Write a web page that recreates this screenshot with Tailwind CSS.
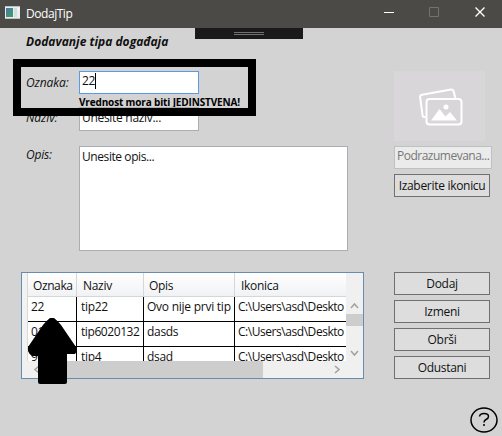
<!DOCTYPE html>
<html lang="sr">
<head>
<meta charset="utf-8">
<title>DodajTip</title>
<script src="https://cdn.jsdelivr.net/npm/@tailwindcss/browser@4"></script>
</head>
<body class="relative flex h-[436px] w-[502px] flex-col overflow-hidden bg-[#d3d3d3] font-['Open_Sans','Noto_Sans',sans-serif] text-[12px] leading-4 tracking-[-0.3px] whitespace-nowrap text-[#111]">
  <header class="flex h-7 shrink-0 items-center bg-[#4b4a47] pl-[5px] text-white">
    <svg class="mb-1 h-[13px] w-[15px]" viewBox="0 0 15 13">
      <defs><linearGradient id="g" x1="0" y1="0" x2="1" y2="1"><stop offset="0" stop-color="#4a78a8"/><stop offset="1" stop-color="#3f9e62"/></linearGradient></defs>
      <path fill="#e9edf0" d="M0 0h15v13H0z"/><path fill="#b8c0c8" d="M0 0h15v1H0zM0 12h15v1H0z"/>
      <path fill="url(#g)" d="M1 2h7v9H1z"/><path fill="#cfe0df" d="M9 2h3v9H9z"/><path fill="#fff" d="M13 2h1v2h-1z"/>
    </svg>
    <h1 class="mb-px ml-[6px] w-[357px] tracking-[-0.45px]">DodajTip</h1>
    <svg class="mb-1 h-[12px] w-[104px]" viewBox="0 0 104 12" fill="none">
      <path stroke="#fff" d="M1 6.500h10"/><path stroke="#73726f" d="M46.500 1.500h9v9h-9z"/><path stroke="#fff" stroke-width="1.400" d="M92.500 1.500l9 9M101.500 1.500l-9 9"/>
    </svg>
  </header>

  <main class="flex h-[408px] flex-col px-[21px]">
    <h2 class="mt-[6px] ml-[5px] h-4 font-bold italic tracking-[0.02px]">Dodavanje tipa događaja</h2>
    <section class="mt-[21px] flex h-[180px]">
      <div class="w-[373px] shrink-0">
        <div class="flex h-9">
          <label class="w-[58px] pt-1 pl-[5px] italic tracking-[-0.1px]">Oznaka:</label>
          <div>
            <div class="flex h-[23px] w-[120px] items-start border border-[#569de5] bg-white pt-px pl-[2px]"><span>22</span><i class="h-4 w-px bg-black"></i></div>
            <p class="text-[10px] leading-4 font-bold tracking-[-0.15px] text-black">Vrednost mora biti JEDINSTVENA!</p>
          </div>
        </div>
        <div class="mb-[15px] flex h-6">
          <label class="w-[58px] pt-[3px] pl-[5px] italic tracking-[-0.1px]">Naziv:</label>
          <div class="h-6 w-[120px] border border-[#abadb3] bg-white pt-[2px] pl-[2px]">Unesite naziv...</div>
        </div>
        <div class="flex h-[105px]">
          <label class="w-[58px] pt-px pl-[5px] italic tracking-[-0.2px]">Opis:</label>
          <div class="w-[269px] border border-[#abadb3] bg-white pt-[2px] pl-[2px] tracking-[-0.42px]">Unesite opis...</div>
        </div>
      </div>
      <aside class="w-[98px] shrink-0">
        <div class="flex h-[70px] w-[91px] items-center justify-center bg-[#d8d6d9]">
          <svg class="mt-[2px] ml-[2px] h-[38px] w-[44px]" viewBox="0 0 44 38" fill="none" stroke="#fff" stroke-width="2" stroke-linejoin="round">
            <path d="M6.500 29L5 29Q3.700 29 3.500 27L1.100 9Q1 7 3 6.700L32 1.500Q34 1.300 34.500 3L36.500 10.500"/>
            <rect x="7.500" y="11" width="35" height="25.500" rx="3"/>
            <circle cx="27" cy="19" r="2.500" fill="#fff" stroke="none"/><path fill="#fff" stroke="none" d="M12 32.500L20.500 21l6 7.500 4.500-4.500 7 8.500z"/>
          </svg>
        </div>
        <div class="mt-[5px] h-[23px] w-[98px] border border-[#bfc0c4] bg-[#ebebeb] pt-px pl-[2px] tracking-[-0.5px] text-[#777]">Podrazumevana...</div>
        <div class="mt-[5px] h-[23px] w-24 border border-[#707070] bg-[#ddd] pt-[3px] text-center">Izaberite ikonicu</div>
      </aside>
    </section>

    <section class="mt-[21px] flex">
      <div class="mr-[30px] flex h-[107px] w-[343px] flex-col border border-[#688caf] bg-white">
        <div class="flex h-[88px]">
          <div class="w-[6px] shrink-0 border-r border-[#d9d9d9] bg-[#f2f2f2]"></div>
          <div class="grid h-[88px] w-[318px] grid-cols-[49px_67px_91px_111px] grid-rows-[24px_25px_25px_14px] overflow-hidden [&>*]:overflow-hidden">
            <div class="border-r border-b border-[#d5d6d8] bg-gradient-to-b from-white to-[#f1f2f4] pt-[5px] pl-[5px] tracking-[-0.4px]">Oznaka</div>
            <div class="border-r border-b border-[#d5d6d8] bg-gradient-to-b from-white to-[#f1f2f4] pt-[5px] pl-[6px]">Naziv</div>
            <div class="border-r border-b border-[#d5d6d8] bg-gradient-to-b from-white to-[#f1f2f4] pt-[5px] pl-[5px]">Opis</div>
            <div class="border-b border-[#d5d6d8] bg-gradient-to-b from-white to-[#f1f2f4] pt-[5px] pl-[6px]">Ikonica</div>
            <div class="border-r border-b border-black pt-[2px] pl-[3px]">22</div>
            <div class="border-r border-b border-black pt-[2px] pl-[4px]">tip22</div>
            <div class="border-r border-b border-black pt-[2px] pl-[3px] tracking-[-0.25px]">Ovo nije prvi tip</div>
            <div class="border-b border-black pt-[2px] pl-[3px] tracking-[-0.45px]">C:\Users\asd\Deskto</div>
            <div class="border-r border-b border-black pt-[2px] pl-[3px]">01</div>
            <div class="border-r border-b border-black pt-[2px] pl-[4px] tracking-[-0.42px]">tip6020132</div>
            <div class="border-r border-b border-black pt-[2px] pl-[3px]">dasds</div>
            <div class="border-b border-black pt-[2px] pl-[3px] tracking-[-0.45px]">C:\Users\asd\Deskto</div>
            <div class="border-r border-black pt-[2px] pl-[3px]">9</div>
            <div class="border-r border-black pt-[2px] pl-[4px]">tip4</div>
            <div class="border-r border-black pt-[2px] pl-[3px]">dsad</div>
            <div class="pt-[2px] pl-[3px] tracking-[-0.45px]">C:\Users\asd\Deskto</div>
          </div>
          <svg class="h-[88px] w-[17px] bg-[#f0f0f0]" viewBox="0 0 17 88" fill="none" stroke="#a3a3a3" stroke-width="1.600">
            <path fill="#cdcdcd" stroke="none" d="M0 41h17v12H0z"/><path d="M5 35l3.500-4 3.500 4M5 78l3.500 4 3.500-4"/>
          </svg>
        </div>
        <svg class="h-[17px] w-[341px] bg-[#f0f0f0]" viewBox="0 0 341 17" fill="none" stroke="#a3a3a3" stroke-width="1.600">
          <path fill="#cdcdcd" stroke="none" d="M24 0h217v17H24z"/><path d="M17 5l-4 3.500 4 3.500M313 5l4 3.500-4 3.500"/>
        </svg>
      </div>
      <div class="flex flex-col gap-[5px] [&>*]:h-[23px] [&>*]:w-24 [&>*]:border [&>*]:border-[#707070] [&>*]:bg-[#ddd]">
        <button class="pt-px">Dodaj</button><button class="pt-px">Izmeni</button><button class="pt-px">Obrši</button><button class="pt-px">Odustani</button>
      </div>
    </section>
    <div class="mt-[28px] mr-[-17px] self-end">
      <svg class="h-[26px] w-[28px]" viewBox="0 0 28 26" fill="none" stroke="#000" stroke-width="1.500">
        <ellipse cx="14" cy="13" rx="13" ry="12"/><path d="M9.500 9.500Q10 6.500 14 6.500Q18.500 6.500 18.500 9.500Q18.500 11.500 16 12.500Q14 13.500 14 15.500"/><path d="M13 18h2"/>
      </svg>
    </div>
  </main>

  <!-- overlays -->
  <div class="absolute top-7 left-[195px] flex h-[11px] w-[108px] items-center justify-center bg-[#1a1a1a]"><i class="h-[3px] w-[30px] border-y border-[#707070]"></i></div>
  <div class="absolute top-[59px] left-[13px] h-[57px] w-[243px] border-8 border-black"></div>
  <svg class="absolute top-[318px] left-[28px] h-[66px] w-[49px]" viewBox="0 0 49 66"><path d="M22 0h4q4 3 7 7l15 22 1 4-2 3h-8v28q0 2-2 2H12q-2 0-2-2V38H4q-3-2-4-5v-4L15 7Q18 3 22 0z"/></svg>
</body>
</html>
